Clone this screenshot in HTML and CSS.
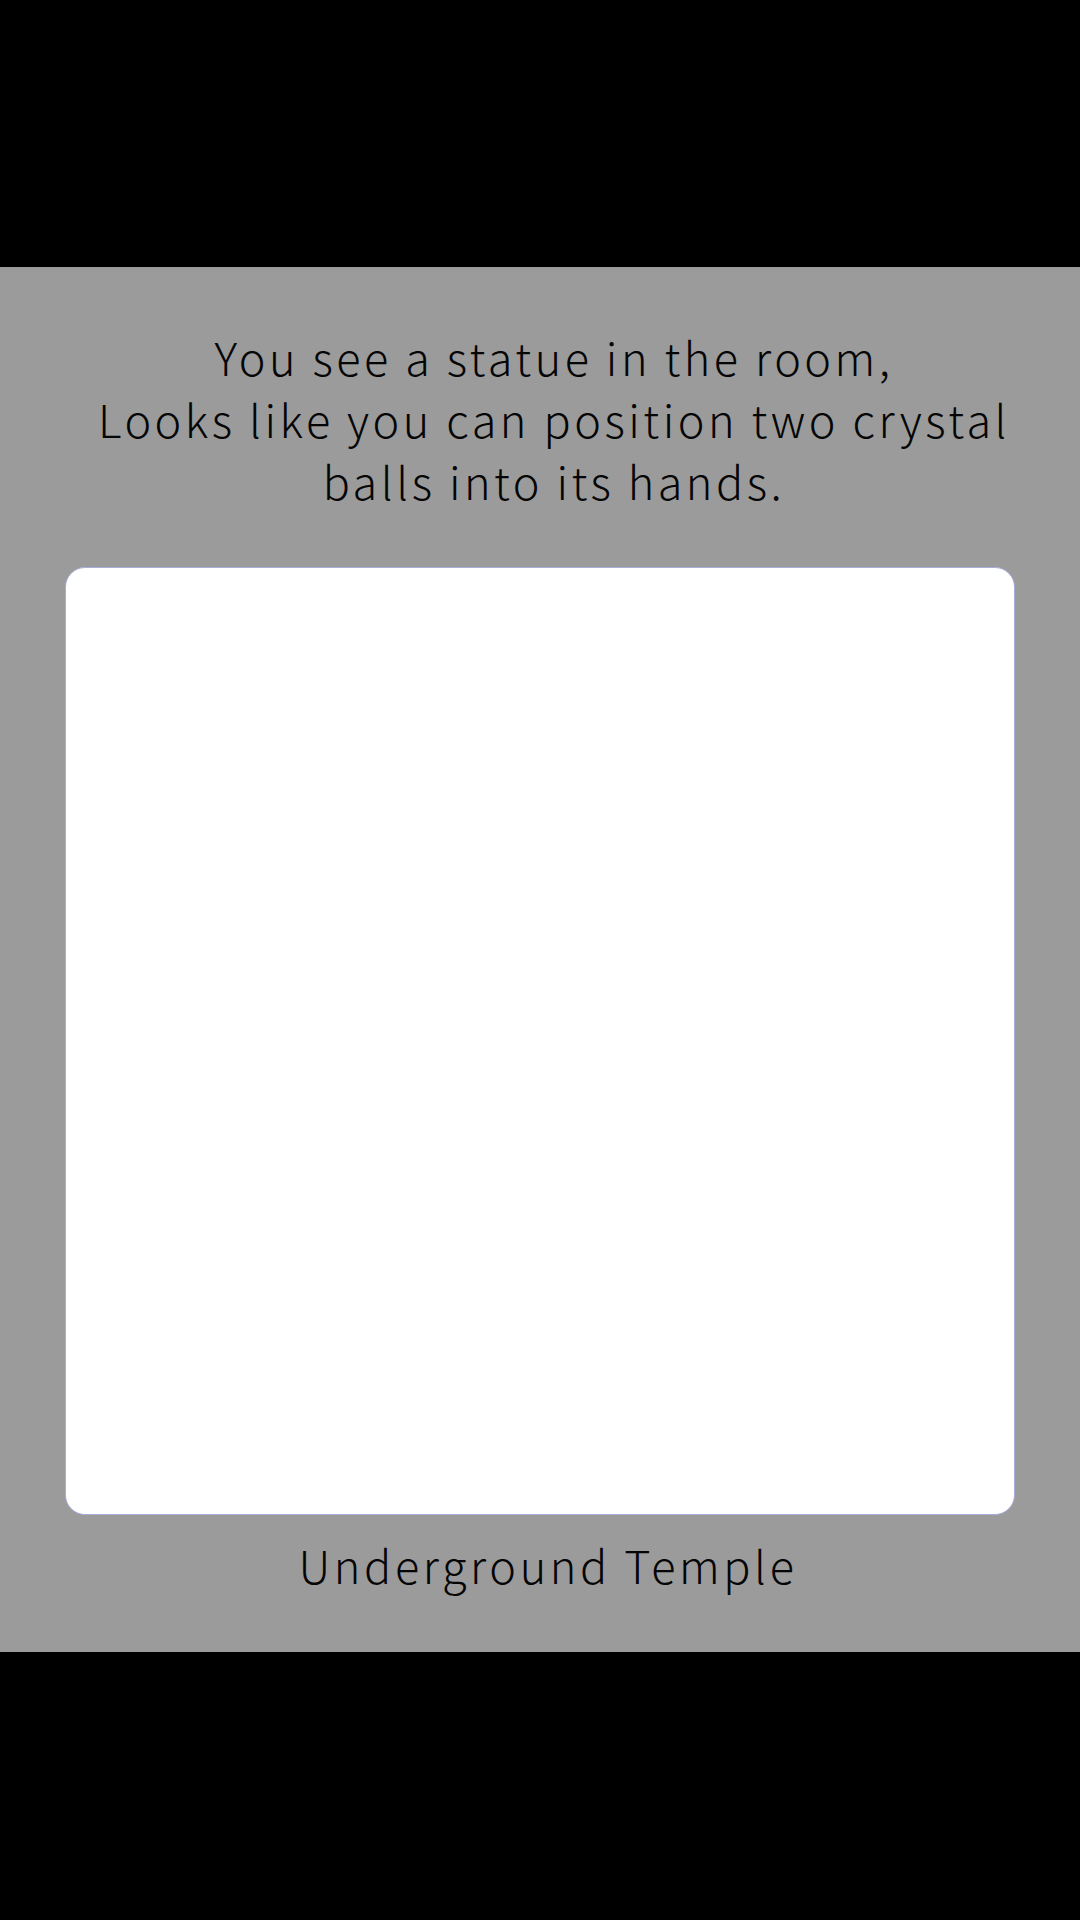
FILE: index.html
```html
<!DOCTYPE html>
<html>
<head>
<meta charset="utf-8">
<link rel="stylesheet" href="styles.css">
</head>
<body>
<div class="top-bar"></div>
<main class="scene">
  <p class="description">You see a statue in the room,<br>Looks like you can position two crystal balls into its hands.</p>
  <div class="card"></div>
  <p class="caption">Underground Temple</p>
</main>
<div class="bottom-bar"></div>
</body>
</html>
```
FILE: styles.css
```css
html, body {
  margin: 0;
  padding: 0;
  background: #000;
  width: 1080px;
  height: 1920px;
  overflow: hidden;
}
.top-bar {
  height: 267px;
  background: #000;
}
.scene {
  height: 1385px;
  background: #9b9b9b;
  display: flex;
  flex-direction: column;
  align-items: center;
  box-sizing: border-box;
  padding-top: 59px;
  font-family: "Noto Sans CJK SC", "Noto Sans", sans-serif;
  font-weight: 300;
  color: #050505;
}
.description {
  margin: 0;
  width: 960px;
  box-sizing: border-box;
  padding-left: 28px;
  text-align: center;
  font-size: 45px;
  line-height: 62px;
  letter-spacing: 3.5px;
}
.card {
  margin-top: 55px;
  width: 950px;
  height: 948px;
  background: #fff;
  border: 1px solid #a7add8;
  box-sizing: border-box;
  border-radius: 20px;
}
.caption {
  margin: 19px 0 0;
  padding-left: 16px;
  font-size: 45px;
  line-height: 62px;
  letter-spacing: 3.6px;
}
.bottom-bar {
  height: 268px;
  background: #000;
}
```
